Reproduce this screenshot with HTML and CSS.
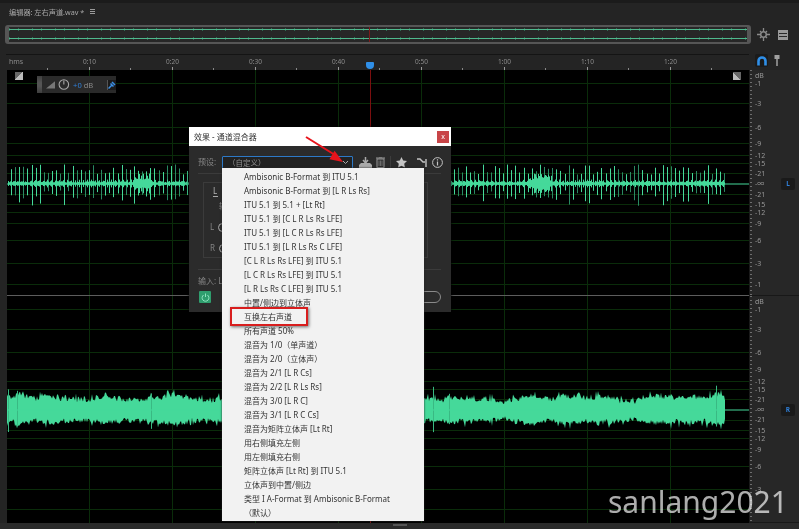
FILE: index.html
```html
<!DOCTYPE html>
<html lang="zh">
<head>
<meta charset="utf-8">
<title>编辑器</title>
<link rel="stylesheet" href="styles.css">
</head>
<body>
<div class="app">
  <header class="panel-head">
    <span class="panel-title">编辑器: 左右声道.wav *</span>
    <span class="burger"><i></i><i></i><i></i></span>
  </header>

  <div class="overview-row">
    <div class="overview">
      <span class="ov-line ov-a"></span>
      <span class="ov-line ov-b"></span>
      <span class="ov-head"></span>
    </div>
    <div class="ov-tools">
      <svg class="ov-ic" width="13" height="13" viewBox="0 0 13 13"><circle cx="6.500" cy="6.500" r="2.800" fill="none" stroke="#8a8a8a" stroke-width="1.500"/><path d="M6.500 0v3M6.500 10v3M0 6.500h3M10 6.500h3M3 3l1 1M10 3l-1 1M3 10l1-1M10 10l-1-1" stroke="#8a8a8a" stroke-width="1.300"/></svg>
      <svg class="ov-ic" width="10" height="10" viewBox="0 0 10 10"><rect width="10" height="10" fill="#9a9a9a"/><path d="M1 3.500h8M1 6.500h8" stroke="#2a2a2a"/></svg>
    </div>
  </div>

  <div class="ruler-row">
    <div class="ruler">
      <span class="r-cell r-first">hms</span>
      <span class="r-cell">0:10</span>
      <span class="r-cell">0:20</span>
      <span class="r-cell">0:30</span>
      <span class="r-cell">0:40</span>
      <span class="r-cell">0:50</span>
      <span class="r-cell">1:00</span>
      <span class="r-cell">1:10</span>
      <span class="r-cell">1:20</span>
      <span class="r-head"></span>
    </div>
    <div class="snap">
      <span class="magnet">
        <svg width="10" height="10" viewBox="0 0 10 10"><path d="M1.500 9.500V5a3.500 3.500 0 0 1 7 0v4.500" fill="none" stroke="#2f8fe8" stroke-width="2.600"/></svg>
      </span>
      <svg width="6" height="11" viewBox="0 0 6 11"><rect x="0.500" width="5" height="4" fill="#a0a0a0"/><path d="M3 4v7" stroke="#a0a0a0" stroke-width="1.500"/></svg>
    </div>
  </div>

  <div class="tracks">
    <div class="track-row track-one">
      <div class="track" id="t1" data-kind="spike"></div>
      <div class="scale">
        <span class="db" style="top:1px">dB</span>
        <span class="db" style="top:9px">-1</span>
        <span class="db" style="top:29px">-3</span>
        <span class="db" style="top:53px">-6</span>
        <span class="db" style="top:69px">-9</span>
        <span class="db" style="top:81px">-12</span>
        <span class="db" style="top:89px">-15</span>
        <span class="db" style="top:99px">-21</span>
        <span class="db" style="top:109px">-∞</span>
        <span class="db" style="top:120px">-21</span>
        <span class="db" style="top:130px">-15</span>
        <span class="db" style="top:138px">-12</span>
        <span class="db" style="top:149px">-9</span>
        <span class="db" style="top:166px">-6</span>
        <span class="db" style="top:189px">-3</span>
        <span class="db" style="top:210px">-1</span>
        <span class="ch-badge ch-l">L</span>
      </div>
    </div>
    <div class="track-row track-two">
      <div class="track" id="t2" data-kind="noise"></div>
      <div class="scale">
        <span class="db" style="top:1px">dB</span>
        <span class="db" style="top:9px">-1</span>
        <span class="db" style="top:29px">-3</span>
        <span class="db" style="top:52px">-6</span>
        <span class="db" style="top:69px">-9</span>
        <span class="db" style="top:81px">-12</span>
        <span class="db" style="top:89px">-15</span>
        <span class="db" style="top:99px">-21</span>
        <span class="db" style="top:109px">-∞</span>
        <span class="db" style="top:119px">-21</span>
        <span class="db" style="top:130px">-15</span>
        <span class="db" style="top:138px">-12</span>
        <span class="db" style="top:149px">-9</span>
        <span class="db" style="top:166px">-6</span>
        <span class="db" style="top:189px">-3</span>
        <span class="ch-badge ch-r">R</span>
      </div>
    </div>
  </div>

  <footer class="foot"><span class="foot-thumb"></span></footer>

  <div class="hud">
    <span class="hud-grip"></span>
    <svg width="11" height="9" viewBox="0 0 11 9"><path d="M0 9L11 0v9z" fill="#777"/></svg>
    <svg width="13" height="13" viewBox="0 0 13 13"><circle cx="6.500" cy="6.500" r="5.300" fill="none" stroke="#a8a8a8" stroke-width="1.200"/><path d="M6.500 2v4.500" stroke="#a8a8a8" stroke-width="1.200"/></svg>
    <span class="hud-val"><b>+0</b> dB</span>
    <span class="hud-pin">
      <svg width="8" height="8" viewBox="0 0 8 8"><path d="M0.500 7.500L3.500 4.500M2.500 2.500L5.500 5.500M4 1L7 4" stroke="#3b8fe6" stroke-width="1.500" fill="none"/></svg>
    </span>
  </div>
  <span class="corner corner-l"></span>
  <span class="corner corner-r"></span>
  <span class="playhead"></span>

  <section class="dialog">
    <div class="dlg-title">
      <span>效果 - 通道混合器</span>
      <span class="dlg-close">x</span>
    </div>
    <div class="dlg-body">
      <div class="preset-row">
        <span class="muted">预设:</span>
        <div class="select"><span>（自定义）</span>
          <svg width="7" height="5" viewBox="0 0 7 5"><path d="M1 1l2.500 2.500L6 1" fill="none" stroke="#aaa"/></svg>
        </div>
        <div class="dlg-tools">
          <svg width="13" height="11" viewBox="0 0 13 11"><path d="M6.500 0v5M4 3l2.500 3L9 3" fill="none" stroke="#aaa" stroke-width="1.500"/><path d="M0 8l2-2h9l2 2v3H0z" fill="#aaa"/></svg>
          <svg class="t-trash" width="9" height="11" viewBox="0 0 9 11"><path d="M0 1h9M3 0h3" stroke="#999"/><rect x="1" y="2" width="7" height="8.500" fill="none" stroke="#999"/><path d="M3 3.500v5.500M4.500 3.500v5.500M6 3.500v5.500" stroke="#999" stroke-width=".6"/></svg>
          <span class="tool-sep"></span>
          <svg class="t-star" width="11" height="11" viewBox="0 0 11 11"><path d="M5.500 0l1.700 3.600 3.800.5-2.800 2.600.7 3.900-3.400-1.900-3.400 1.900.7-3.900L0 4.100l3.800-.5z" fill="#c4c4c4"/></svg>
          <svg class="t-route" width="10" height="9" viewBox="0 0 10 9"><path d="M0 1h3l3 3h2M9 1v8" fill="none" stroke="#c4c4c4" stroke-width="1.400"/></svg>
          <svg class="t-info" width="11" height="11" viewBox="0 0 11 11"><circle cx="5.500" cy="5.500" r="4.900" fill="none" stroke="#c4c4c4"/><path d="M5.500 4.500v4M5.500 2.300v1.200" stroke="#c4c4c4" stroke-width="1.200"/></svg>
        </div>
      </div>
      <div class="matrix">
        <span class="tab-l">L</span>
        <span class="m-input">输</span>
        <div class="m-row"><span class="muted">L</span><i class="knob"></i></div>
        <div class="m-row"><span class="muted">R</span><i class="knob"></i></div>
      </div>
      <div class="input-row"><span class="muted">输入: L</span></div>
      <div class="power-row">
        <span class="power">
          <svg width="9" height="9" viewBox="0 0 9 9"><path d="M2.600 2a3.400 3.400 0 1 0 3.800 0M4.500 .5v3.500" fill="none" stroke="#8fe3bf"/></svg>
        </span>
        <span class="apply"></span>
      </div>
    </div>

    <ul class="menu">
      <li>Ambisonic B-Format 到 ITU 5.1</li>
      <li>Ambisonic B-Format 到 [L R Ls Rs]</li>
      <li>ITU 5.1 到 5.1 + [Lt Rt]</li>
      <li>ITU 5.1 到 [C L R Ls Rs LFE]</li>
      <li>ITU 5.1 到 [L C R Ls Rs LFE]</li>
      <li>ITU 5.1 到 [L R Ls Rs C LFE]</li>
      <li>[C L R Ls Rs LFE] 到 ITU 5.1</li>
      <li>[L C R Ls Rs LFE] 到 ITU 5.1</li>
      <li>[L R Ls Rs C LFE] 到 ITU 5.1</li>
      <li>中置/侧边到立体声</li>
      <li>互换左右声道</li>
      <li>所有声道 50%</li>
      <li>混音为 1/0（单声道）</li>
      <li>混音为 2/0（立体声）</li>
      <li>混音为 2/1 [L R Cs]</li>
      <li>混音为 2/2 [L R Ls Rs]</li>
      <li>混音为 3/0 [L R C]</li>
      <li>混音为 3/1 [L R C Cs]</li>
      <li>混音为矩阵立体声 [Lt Rt]</li>
      <li>用右侧填充左侧</li>
      <li>用左侧填充右侧</li>
      <li>矩阵立体声 [Lt Rt] 到 ITU 5.1</li>
      <li>立体声到中置/侧边</li>
      <li>类型 I A-Format 到 Ambisonic B-Format</li>
      <li class="default">（默认）</li>
    </ul>
  </section>

  <span class="callout"></span>
  <svg class="arrow" width="48" height="30" viewBox="0 0 48 30"><path d="M2 2L31 20" stroke="#e8141c" stroke-width="2" fill="none"/><path d="M39 27L25.400 24.200L30.600 15.800z" fill="#e8141c"/></svg>
  <span class="watermark">sanlang2021</span>
</div>
<script src="wave.js"></script>
</body>
</html>
```
FILE: styles.css
```css
* { box-sizing: border-box; margin: 0; padding: 0; }
html, body { width: 799px; height: 529px; overflow: hidden; }
body {
  background: #232323;
  font-family: "Noto Sans", "Noto Sans CJK SC", sans-serif;
  color: #a0a0a0;
}
.app {
  position: relative;
  width: 799px;
  height: 529px;
  display: flex;
  flex-direction: column;
  border-top: 3px solid #1b1b1b;
  background: #242424;
  filter: blur(.35px);
}

.panel-head {
  height: 17px;
  padding-left: 9px;
  display: flex;
  align-items: center;
  gap: 6px;
  font-size: 7.200px;
}
.panel-title { color: #a6a6a6; }
.burger { display: flex; flex-direction: column; gap: 1px; width: 5px; }
.burger i { height: 1px; background: #9a9a9a; }

.overview-row {
  margin-top: 5px;
  padding-left: 5px;
  display: flex;
  align-items: center;
  height: 19px;
}
.overview {
  position: relative;
  width: 746px;
  height: 19px;
  border: 2px solid #565656;
  border-left-width: 4px;
  border-right-width: 4px;
  border-radius: 3px;
  background: #272727;
}
.ov-line {
  position: absolute;
  left: 0;
  right: 0;
  height: 3px;
  background:
    linear-gradient(#4fb98d, #4fb98d) 0 1px / 100% 1px no-repeat,
    repeating-linear-gradient(to right, #2f6b53 0 1px, transparent 1px 9px, #2f6b53 9px 10px, transparent 10px 23px);
}
.ov-a { top: 1px; }
.ov-b { top: 10px; }
.ov-head { position: absolute; left: 360px; top: 0; bottom: 0; width: 1px; background: #7d1a1a; }
.ov-tools { display: flex; align-items: center; gap: 8px; margin-left: 6px; }

.ruler-row {
  margin-top: 10px;
  padding-left: 6px;
  display: flex;
  height: 16px;
}
.ruler {
  position: relative;
  width: 743px;
  height: 16px;
  display: flex;
  border-top: 1px solid #141414;
  padding-left: 1px;
}
.r-cell {
  position: relative;
  flex: 0 0 83px;
  text-align: center;
  font-size: 6.500px;
  line-height: 14px;
  color: #8c8c8c;
}
.r-cell::before {
  content: "";
  position: absolute;
  left: 41px;
  bottom: 0;
  width: 1px;
  height: 3px;
  background: #999;
}
.r-cell::after {
  content: "";
  position: absolute;
  right: 0;
  bottom: 0;
  width: 1px;
  height: 2px;
  background: #888;
}
.r-first { flex-basis: 41px; text-align: left; padding-left: 2px; font-size: 7px; }
.r-first::before { display: none; }
.r-head {
  position: absolute;
  left: 360px;
  top: 7px;
  width: 8px;
  height: 7px;
  background: #2f8fe8;
  border-radius: 1px 1px 4px 4px;
}
.snap { display: flex; align-items: center; gap: 6px; margin-left: 6px; margin-top: -3px; }
.magnet {
  width: 13px;
  height: 13px;
  background: #1b1b1b;
  border-radius: 2px;
  display: flex;
  align-items: center;
  justify-content: center;
}

.tracks { display: flex; flex-direction: column; }
.track-row { display: flex; height: 226px; padding-left: 7px; }
.track-two { height: 227px; border-top: 0; }
.track { width: 742px; height: 100%; background: #000; }
.track svg { display: block; }
.track-one .track { border-bottom: 1px solid #5d5d5d; }
.scale {
  position: relative;
  flex: 1;
  background: #272727;
  border-left: 1px solid #1a1a1a;
  border-bottom: 1px solid #181818;
}
.scale::before {
  content: "";
  position: absolute;
  left: 0;
  top: 0;
  bottom: 0;
  width: 2px;
  background: repeating-linear-gradient(to bottom, #6e6e6e 0 1px, transparent 1px 4px);
}
.db {
  position: absolute;
  left: 5px;
  font-size: 7px;
  line-height: 9px;
  color: #989898;
}
.ch-badge {
  position: absolute;
  left: 31px;
  width: 14px;
  height: 12px;
  background: #1a1a1a;
  border-radius: 2px;
  color: #2f7fd8;
  font-size: 6.500px;
  font-weight: 700;
  line-height: 12px;
  text-align: center;
}
.ch-l { top: 108px; }
.ch-r { top: 108px; }

.foot { flex: 1; position: relative; display: flex; justify-content: center; background: #2a2a2a; }
.foot-thumb { width: 14px; height: 2px; margin-top: 1px; background: #555; }

.hud {
  position: absolute;
  left: 37px;
  top: 73px;
  width: 79px;
  height: 17px;
  display: flex;
  align-items: center;
  gap: 3px;
  background: #2a2a2a;
  font-size: 7.500px;
}
.hud-grip { width: 5px; height: 100%; background: linear-gradient(#3e3e3e, #555 40%, #555 60%, #3e3e3e); margin-right: 1px; }
.hud-val { color: #8a8a8a; width: 32px; }
.hud-val b { color: #2f7fd8; font-weight: 400; }
.hud-pin { width: 10px; height: 10px; margin-left: 2px; display: flex; align-items: center; justify-content: center; background: #1b1b1b; border-left: 1px solid #555; }

.corner {
  position: absolute;
  top: 69px;
  width: 8px;
  height: 8px;
}
.corner-l { left: 15px; background: linear-gradient(135deg, #666 50%, #bbb 50%); }
.corner-r { left: 733px; background: linear-gradient(45deg, #bbb 50%, #666 50%); }
.playhead { position: absolute; left: 370px; top: 67px; width: 1px; height: 453px; background: #7b0f0f; }

.dialog {
  position: absolute;
  left: 189px;
  top: 124px;
  width: 262px;
  height: 185px;
  display: flex;
  flex-direction: column;
  background: #2b2b2b;
  box-shadow: 0 0 3px #000;
}
.dlg-title {
  height: 19px;
  padding: 0 2px 0 5px;
  display: flex;
  align-items: center;
  justify-content: space-between;
  background: #fff;
  color: #333;
  font-size: 8px;
}
.dlg-close {
  width: 12px;
  height: 12px;
  background: #c84548;
  color: #fff;
  font-size: 7px;
  line-height: 11px;
  text-align: center;
}
.dlg-body { flex: 1; padding: 0 10px 0 9px; display: flex; flex-direction: column; font-size: 8px; }
.muted { color: #858585; }
.preset-row {
  height: 28px;
  padding-top: 10px;
  display: flex;
  align-items: flex-start;
  border-bottom: 1px solid #3b3b3b;
}
.preset-row .muted { flex: none; width: 24px; line-height: 12px; }
.select {
  flex: none;
  width: 131px;
  height: 13px;
  border: 1px solid #2d79c7;
  border-radius: 1px;
  padding: 0 3px 0 5px;
  display: flex;
  align-items: center;
  justify-content: space-between;
  color: #909090;
  background: #222;
  font-size: 7.500px;
}
.dlg-tools { flex: none; display: flex; align-items: center; margin-left: 6px; margin-right: -6px; height: 12px; }
.dlg-tools svg { flex: none; }
.t-trash { margin-left: 4px; }
.tool-sep { width: 1px; height: 12px; margin-left: 5px; background: #3d3d3d; }
.t-star { margin-left: 5px; }
.t-route { margin-left: 10px; }
.t-info { margin-left: 5px; }
.matrix {
  margin: 8px 0 0 5px;
  width: 225px;
  height: 76px;
  border: 1px solid #3b3b3b;
  padding: 3px 0 0 9px;
  display: flex;
  flex-direction: column;
}
.tab-l { color: #b5b5b5; line-height: 10px; width: 5px; border-bottom: 1px solid #aaa; }
.m-input { margin: 4px 0 0 6px; line-height: 10px; color: #8d8d8d; }
.m-row { margin-top: 9px; margin-left: -3px; display: flex; align-items: center; gap: 4px; height: 12px; }
.knob { width: 9px; height: 9px; border: 1.500px solid #aaa; border-radius: 50%; margin-top: 3px; }
.input-row {
  margin-top: 11px;
  border-top: 1px solid #3b3b3b;
  padding-top: 5px;
  line-height: 11px;
  height: 22px;
}
.power-row { display: flex; justify-content: space-between; align-items: center; margin-left: 1px; margin-right: 0; }
.power {
  width: 12px;
  height: 12px;
  background: #2f9e6e;
  border-radius: 1px;
  display: flex;
  align-items: center;
  justify-content: center;
}
.apply { width: 60px; height: 12px; border: 1px solid #8a8a8a; border-radius: 6px; }

.menu {
  position: absolute;
  left: 33px;
  top: 41px;
  width: 202px;
  height: 353px;
  padding-top: 2px;
  list-style: none;
  background: #f2f2f2;
  box-shadow: 0 0 2px #222;
  color: #333;
  font-size: 8px;
}
.menu li { height: 14px; line-height: 14px; padding-left: 22px; white-space: nowrap; }
.menu li.default { padding-left: 22px; }

.callout {
  position: absolute;
  left: 230px;
  top: 304px;
  width: 78px;
  height: 19px;
  border: 2px solid #d81e1e;
  box-shadow: 1px 1px 3px rgba(0, 0, 0, .55);
}
.arrow { position: absolute; left: 304px; top: 132px; }
.watermark {
  position: absolute;
  left: 608px;
  top: 479px;
  font-size: 30px;
  line-height: 40px;
  color: rgba(255, 255, 255, .68);
  white-space: nowrap;
}
```
FILE: wave.js
```javascript
(function () {
  var NS = "http://www.w3.org/2000/svg";
  var W = 742, END = 718;
  var GREEN = "#45d99a";
  var seed = 20210;
  function rnd() {
    seed = (seed * 16807) % 2147483647;
    return (seed & 65535) / 65535;
  }
  var rows = {
    t1: { center: 113.5, h: [13, 33, 57, 73, 85, 93, 103, 124, 134, 142, 153, 170, 193, 214] },
    t2: { center: 113.5, h: [13, 33, 56, 73, 85, 93, 103, 124, 134, 142, 153, 170, 193, 213] }
  };
  function el(svg, name, attrs) {
    var e = document.createElementNS(NS, name);
    for (var k in attrs) e.setAttribute(k, attrs[k]);
    svg.appendChild(e);
    return e;
  }
  function grid(svg, row, height) {
    row.h.forEach(function (y) {
      el(svg, "path", { d: "M0 " + (y + .5) + "H" + W, stroke: "#0a2c0a" });
    });
    for (var i = 1; i <= 8; i++) {
      var x = Math.round(i * 82.9 - .5);
      el(svg, "path", { d: "M" + (x + .5) + " 0V" + height, stroke: "#0a2c0a" });
    }
  }
  function spikes(svg, c) {
    var bright = "", dim = "", core = "";
    for (var x = 1; x < END; x += 1) {
      var a = 1 + rnd() * 1.5;
      if (x % 4 === 0) a += 1.5;
      var burst = (x > 125 && x < 145) || (x > 520 && x < 545);
      if (burst) a = 3 + rnd() * 7;
      core += "M" + (x + .5) + " " + (c - a) + "V" + (c + a);
    }
    for (var s = 4; s < END; s += 4.1) {
      var sx = Math.round(s) + .5;
      var big = 9 + rnd() * 10;
      var d = "M" + sx + " " + (c - big) + "V" + (c + big * (.7 + rnd() * .5));
      if (rnd() < .62) bright += d; else dim += d;
    }
    el(svg, "path", { d: dim, stroke: "#2a8a63", fill: "none" });
    el(svg, "path", { d: bright, stroke: GREEN, fill: "none" });
    el(svg, "path", { d: core, stroke: GREEN, fill: "none" });
  }
  function noise(svg, c) {
    var top = [], bot = [], spike = "";
    var slow = 0;
    for (var x = 0; x <= END; x += 1) {
      slow = slow * .92 + (rnd() - .5) * 1.4;
      var up = 9 + slow * 1.8 + rnd() * 5 + (rnd() < .08 ? 4 : 0);
      var dn = 9.500 + slow * 1.4 + rnd() * 5 + (rnd() < .08 ? 4 : 0);
      top.push(x + " " + (c - up).toFixed(1));
      bot.unshift(x + " " + (c + dn).toFixed(1));
      if (rnd() < .012) {
        var sx = x + .5;
        spike += "M" + sx + " " + (c - 14 - rnd() * 10) + "V" + (c + 14 + rnd() * 9);
      }
    }
    el(svg, "path", { d: "M" + top.join("L") + "L" + bot.join("L") + "Z", fill: GREEN });
    el(svg, "path", { d: spike, stroke: "#39b983", fill: "none" });
  }
  ["t1", "t2"].forEach(function (id) {
    var host = document.getElementById(id);
    var height = host.clientHeight;
    var svg = document.createElementNS(NS, "svg");
    svg.setAttribute("width", W);
    svg.setAttribute("height", height);
    host.appendChild(svg);
    var row = rows[id];
    grid(svg, row, height);
    if (host.dataset.kind === "spike") spikes(svg, row.center);
    else noise(svg, row.center);
    el(svg, "path", { d: "M0 " + (row.center + .5) + "H" + W, stroke: GREEN });
  });
})();
```
